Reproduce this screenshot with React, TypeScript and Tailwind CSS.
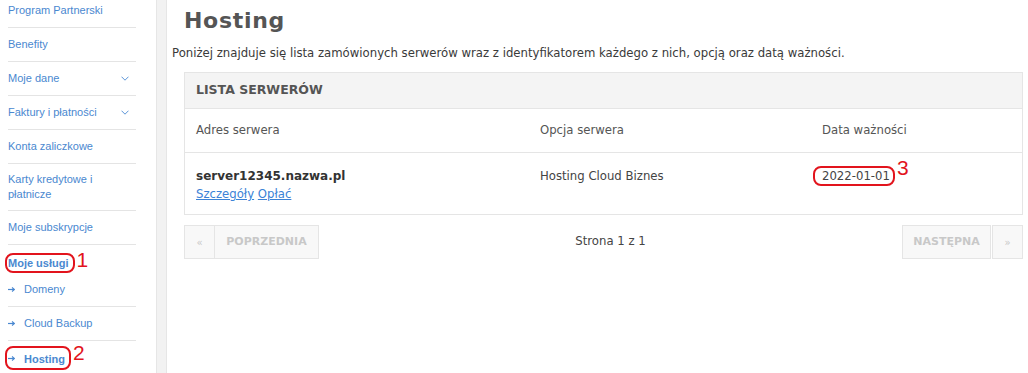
import React from 'react';

type NavItem = {
    label: string;
    chevron?: boolean;
    sub?: boolean;
    bold?: boolean;
    mark?: string;
    tall?: boolean;
    noBorder?: boolean;
};

const navItems: NavItem[] = [
    { label: 'Program Partnerski' },
    { label: 'Benefity' },
    { label: 'Moje dane', chevron: true },
    { label: 'Faktury i płatności', chevron: true },
    { label: 'Konta zaliczkowe' },
    { label: 'Karty kredytowe i płatnicze', tall: true },
    { label: 'Moje subskrypcje' },
    { label: 'Moje usługi', bold: true, mark: '1', noBorder: true },
    { label: 'Domeny', sub: true },
    { label: 'Cloud Backup', sub: true },
    { label: 'Hosting', sub: true, bold: true, mark: '2', noBorder: true },
];

// red hand-drawn style marker from the screenshot
const Marked: React.FC<{ n: string; children: React.ReactNode; numClass?: string; boxClass?: string }> = ({ n, children, numClass, boxClass }) => (
    <span className="inline-flex items-start">
        <span className={`border-2 border-[#e2141d] rounded-[8px] leading-[16px] ${boxClass ?? 'px-[2px]'}`}>{children}</span>
        <span className={`text-[#e2141d] text-[21px] leading-none font-normal ml-[2px] ${numClass ?? ''}`} style={{ fontFamily: '"Liberation Sans", Arial, sans-serif' }}>
            {n}
        </span>
    </span>
);

const Chevron = () => (
    <svg width="8" height="5" viewBox="0 0 8 5" className="ml-auto mr-[7px]">
        <path d="M0.5 0.7 L4 4.2 L7.5 0.7" fill="none" stroke="#5b95d8" strokeWidth="1" />
    </svg>
);

const Arrow = () => (
    <svg width="7" height="5" viewBox="0 0 7 5" className="mr-[9px] shrink-0">
        <path d="M0 2.5 H6" stroke="#4a88d0" strokeWidth="1.2" />
        <path d="M4 0.5 L6.5 2.5 L4 4.5" fill="none" stroke="#4a88d0" strokeWidth="1.1" />
    </svg>
);

const Sidebar = () => (
    <div className="w-[156px] shrink-0 pl-[8px] overflow-hidden">
        <div className="w-[128px] mt-[-6px] font-['Liberation_Sans',Arial,sans-serif] text-[11px] text-[#4a88d0]">
            {navItems.map((item) => {
                let h = 'h-[34px]';
                if (item.tall) h = 'h-[47px]';
                if (item.label === 'Moje usługi') h = 'h-[28px] pt-[7px]';
                return (
                    <div
                        key={item.label}
                        className={`flex items-center ${h} ${item.noBorder ? '' : 'border-b border-[#e4e4e4]'} ${item.bold ? 'font-bold' : ''}`}
                    >
                        {item.mark ? (
                            <div className="ml-[-3px]">
                                <Marked n={item.mark} numClass="mt-[-4px]" boxClass={item.sub ? 'pl-[1px] pr-[4px] py-[1px]' : 'pl-[1px] pr-[4px]'}>
                                    <span className="inline-flex items-center">
                                        {item.sub && <Arrow />}
                                        {item.label}
                                    </span>
                                </Marked>
                            </div>
                        ) : (
                            <>
                                {item.sub && <Arrow />}
                                <span className={item.tall ? 'leading-[15px] w-[100px]' : ''}>{item.label}</span>
                                {item.chevron && <Chevron />}
                            </>
                        )}
                    </div>
                );
            })}
        </div>
    </div>
);

const PagerButton: React.FC<{ children: React.ReactNode; className?: string }> = ({ children, className }) => (
    <div className={`h-[34px] flex items-center justify-center border border-[#e5e5e5] bg-[#f8f8f8] text-[#c8c8c8] font-bold ${className ?? ''}`}>
        {children}
    </div>
);

export default function App() {
    return (
        <div className="flex w-[1028px] h-[373px] overflow-hidden bg-white">
            <Sidebar />
            <div className="w-[11px] shrink-0 bg-[#f2f2f2] border-x border-[#e6e6e6]" />

            <div className="flex-1 pl-[17px] pr-[5px] font-['DejaVu_Sans',Verdana,sans-serif] text-[#444]">
                <h1 className="text-[22px] tracking-[0.7px] font-bold text-[#555] mt-[9px] leading-[24px]">Hosting</h1>
                <p className="text-[11.7px] mt-[12px] ml-[-12px] leading-[16px] text-[#3a3a3a]">
                    Poniżej znajduje się lista zamówionych serwerów wraz z identyfikatorem każdego z nich, opcją oraz datą ważności.
                </p>

                <div className="mt-[11px] border border-[#e5e5e5]">
                    <div className="h-[36px] bg-[#f4f4f4] border-b border-[#e5e5e5] flex items-center px-[11px] text-[12.5px] font-bold text-[#555]">
                        LISTA SERWERÓW
                    </div>
                    <div className="grid grid-cols-[343px_282px_1fr] h-[44px] items-center border-b border-[#e5e5e5] text-[11.7px] text-[#555]">
                        <div className="px-[11px]">Adres serwera</div>
                        <div className="px-[12px]">Opcja serwera</div>
                        <div className="px-[12px]">Data ważności</div>
                    </div>
                    <div className="grid grid-cols-[343px_282px_1fr] h-[61px] text-[11.7px] pt-[15px]">
                        <div className="px-[11px]">
                            <div className="font-bold text-[12px] text-[#333] leading-[16px]">server12345.nazwa.pl</div>
                            <div className="mt-[2px] leading-[16px] text-[#3b82d6]">
                                <span className="underline">Szczegóły</span> <span className="underline">Opłać</span>
                            </div>
                        </div>
                        <div className="px-[12px] leading-[16px] text-[#444]">Hosting Cloud Biznes</div>
                        <div className="pl-[3px] mt-[-2px] text-[#444]">
                            <Marked n="3" numClass="mt-[-9px]" boxClass="pl-[7px] pr-[3px]">
                                2022-01-01
                            </Marked>
                        </div>
                    </div>
                </div>

                <div className="mt-[10px] flex items-center justify-between text-[11px]">
                    <div className="flex">
                        <PagerButton className="w-[31px] text-[10px] font-normal">&laquo;</PagerButton>
                        <PagerButton className="w-[104px] border-l-0">POPRZEDNIA</PagerButton>
                    </div>
                    <div className="text-[11.7px] text-[#444]">Strona 1 z 1</div>
                    <div className="flex">
                        <PagerButton className="w-[89px]">NASTĘPNA</PagerButton>
                        <PagerButton className="w-[31px] text-[10px] font-normal ml-[1px]">&raquo;</PagerButton>
                    </div>
                </div>
            </div>
        </div>
    );
}
